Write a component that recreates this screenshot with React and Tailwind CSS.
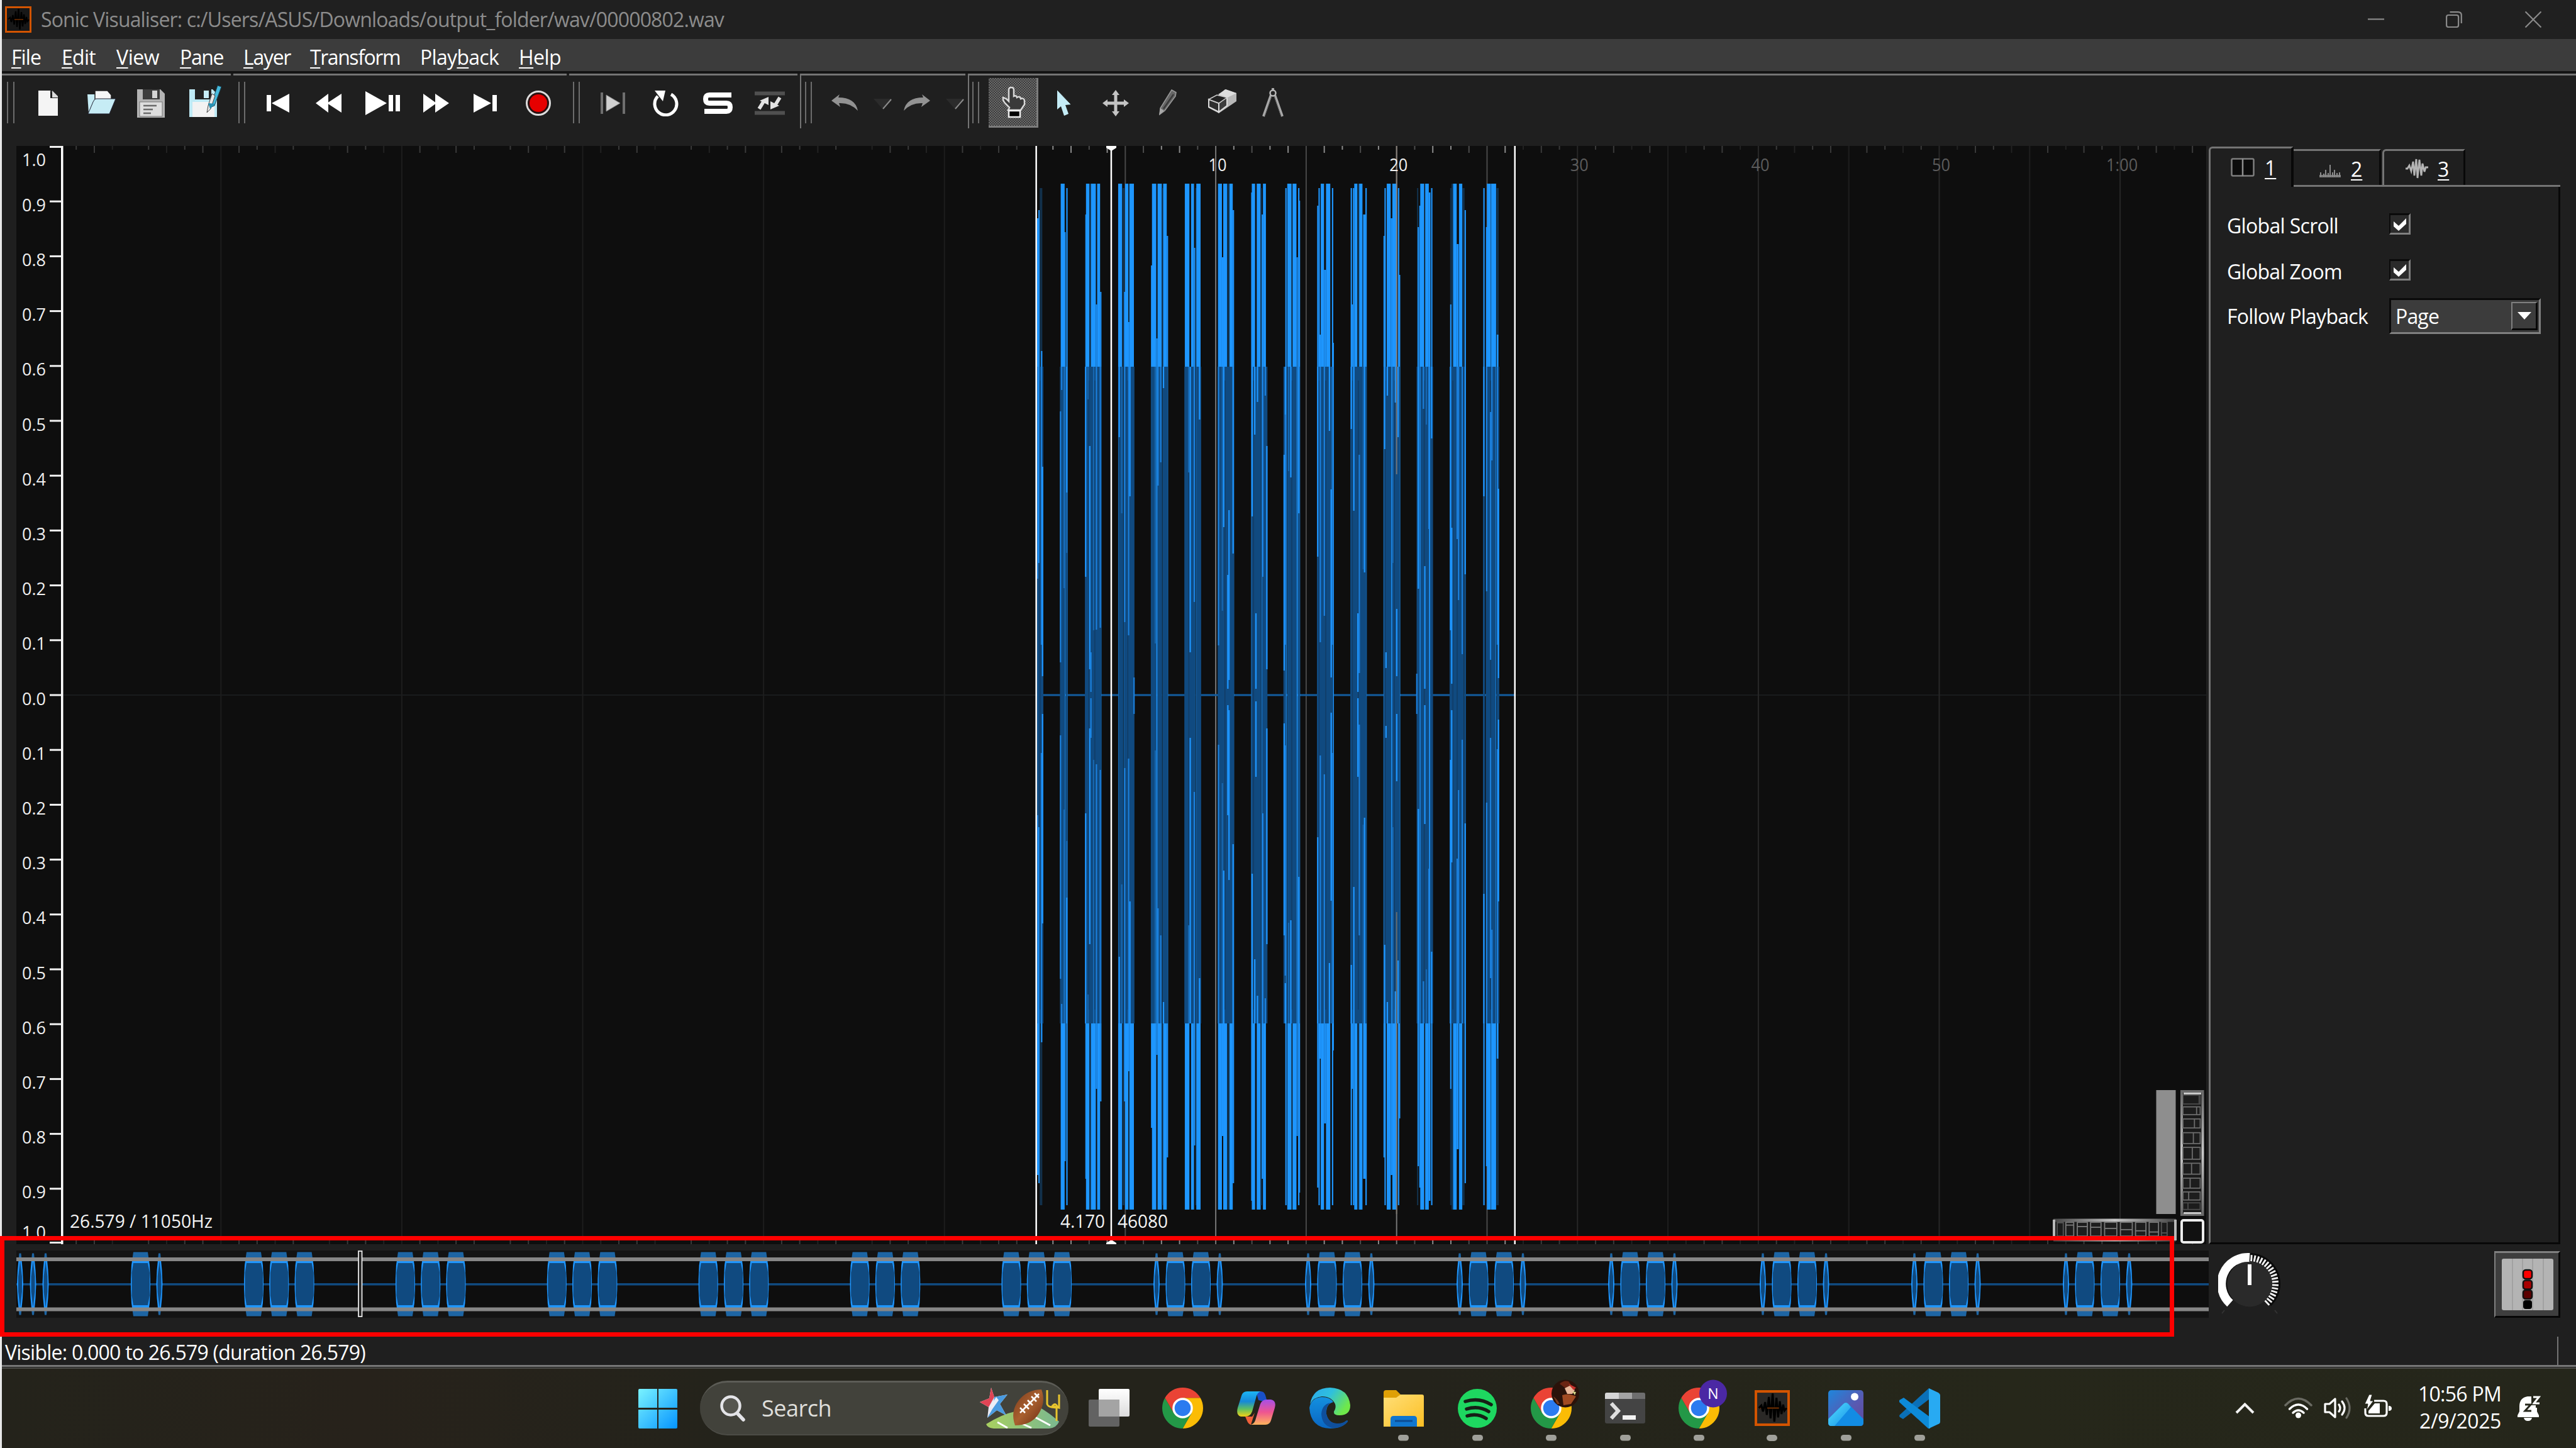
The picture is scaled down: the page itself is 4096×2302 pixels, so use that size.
import React, { useLayoutEffect, useRef } from "react";

const BRIGHT = "#1e96ff";
const MID = "#1b7fdb";
const SOFT = "#1767b0";
const DARK = "#104a80";
const DIM = "#12304a";
const BG = "#0e0e0e";

/* Text whose letter spacing is adjusted so that it takes exactly w pixels. */
function Fit({ w, className = "", children }) {
  const ref = useRef(null);
  useLayoutEffect(() => {
    const el = ref.current;
    const fit = () => {
      el.style.letterSpacing = "0px";
      const natural = el.getBoundingClientRect().width;
      const n = el.textContent.length;
      el.style.letterSpacing = (w - natural) / n + "px";
    };
    fit();
    if (document.fonts && document.fonts.ready) document.fonts.ready.then(fit);
  }, [w]);
  return (
    <span ref={ref} className={"inline-block whitespace-pre " + className}>
      {children}
    </span>
  );
}

/* ---------- title and menu bars ---------- */

function SonicIcon({ className, s = 42, h = 42, bg = "#181818" }) {
  return (
    <svg className={className} width={s} height={h} viewBox="0 0 42 42" preserveAspectRatio="none">
      <rect x="1.5" y="1.5" width="39" height="39" fill={bg} stroke="#d35400" strokeWidth="3" />
      <path d="M5 21H37" stroke="#6a2c00" strokeWidth="1.6" />
      <path
        d="M5 21L8 18L10 25L12.500 14L14.500 29L17 8L19 33L21.500 4L23.500 37L26 9L28 32L30 13L32 28L34 17L35.500 24L38 21"
        fill="none"
        stroke="#000"
        strokeWidth="2.400"
      />
      <path d="M15 21H29" stroke="#7a3200" strokeWidth="1.4" />
    </svg>
  );
}

function TitleBar() {
  return (
    <div className="flex h-[62px] shrink-0 items-center bg-[#202020] pl-[8px] pr-[55px]">
      <SonicIcon />
      <div className="ml-[15px] h-[60px] text-[32px] leading-[59px] text-[#8c8c8c]">
        <Fit w={1086}>Sonic Visualiser: c:/Users/ASUS/Downloads/output_folder/wav/00000802.wav</Fit>
      </div>
      <svg className="ml-auto" width="26" height="26" viewBox="0 0 26 26">
        <path d="M0 12.500H26" stroke="#8a8a8a" strokeWidth="2.200" />
      </svg>
      <svg className="ml-[98px]" width="26" height="26" viewBox="0 0 26 26" fill="none" stroke="#8a8a8a" strokeWidth="2.200">
        <rect x="1.100" y="6" width="19" height="19" rx="3" />
        <path d="M6.500 1.200H19.500Q24.800 1.200 24.800 6.500V19" />
      </svg>
      <svg className="ml-[100px]" width="26" height="26" viewBox="0 0 26 26">
        <path d="M0.500 0.500L25.500 25.500M25.500 0.500L0.500 25.500" stroke="#8a8a8a" strokeWidth="2.200" />
      </svg>
    </div>
  );
}

function Menu({ pre = "", k, post, w, className }) {
  return (
    <div className={className}>
      <Fit w={w}>
        {pre}
        <span className="underline decoration-[2px] underline-offset-[4px]">{k}</span>
        {post}
      </Fit>
    </div>
  );
}

function MenuBar() {
  return (
    <div className="flex h-[55px] shrink-0 border-b-[4px] border-[#141414] bg-[#3c3c3c] pl-[18px] text-[32px] leading-[57px] text-white">
      <Menu k="F" post="ile" w={47} />
      <Menu className="ml-[33px]" k="E" post="dit" w={54} />
      <Menu className="ml-[33px]" k="V" post="iew" w={68} />
      <Menu className="ml-[33px]" k="P" post="ane" w={69} />
      <Menu className="ml-[32px]" k="L" post="ayer" w={75} />
      <Menu className="ml-[31px]" k="T" post="ransform" w={143} />
      <Menu className="ml-[32px]" pre="Play" k="b" post="ack" w={125} />
      <Menu className="ml-[32px]" k="H" post="elp" w={67} />
    </div>
  );
}

/* ---------- toolbar ---------- */

function Handle({ className }) {
  return <div className={"mt-[10px] h-[66px] shrink-0 border-x-[2px] border-[#6c6c6c] " + className} />;
}

function Ico({ w, h, className, children }) {
  return (
    <svg className={"shrink-0 " + className} width={w} height={h} viewBox={`0 0 ${w} ${h}`}>
      {children}
    </svg>
  );
}

function Caret({ className }) {
  return (
    <Ico w={29} h={17} className={className}>
      <path d="M0 0H29L15 17Z" fill="#2b2b2b" />
      <path d="M28 1L15 16" stroke="#8c8c8c" strokeWidth="2" />
    </Ico>
  );
}

function Toolbar() {
  return (
    <div className="flex h-[115px] shrink-0 gap-[4px] pl-[3px]">
      <div className="flex h-[87px] w-[364px] items-start border-t-[3px] border-[#747474]">
        <Handle className="ml-[8px] w-[12px]" />
        <Ico w={33} h={42} className="ml-[37px] mt-[23px]">
          <path d="M1 1H20L32 13V41H1Z" fill="#f4f4f4" />
          <path d="M20 1V13H32Z" fill="#1f1f1f" />
          <path d="M23 1L32 10V12H23Z" fill="#dcdcdc" />
        </Ico>
        <Ico w={48} h={39} className="ml-[44px] mt-[23px]">
          <path d="M2 7H14V34L4 38Z" fill="#c6ecf5" />
          <path d="M14 1H34L40 8V18H14Z" fill="#f6f6f6" stroke="#222" strokeWidth="1.500" />
          <path d="M16 14H47L37 38H3L11 19Q13 14 16 14Z" fill="#c6ecf5" stroke="#223" strokeWidth="1" />
        </Ico>
        <Ico w={46} h={47} className="ml-[32px] mt-[21px]">
          <path d="M1 1H38L45 8V46H1Z" fill="#b4b4b4" />
          <rect x="10" y="1" width="27" height="16" fill="#3c3c3c" />
          <rect x="25" y="3" width="8" height="12" fill="#d4d4d4" />
          <rect x="5" y="21" width="36" height="23" fill="#dedede" stroke="#777" strokeWidth="1" />
          <path d="M11 27H32M11 33H26M11 39H23" stroke="#6a6a6a" strokeWidth="2.500" />
        </Ico>
        <Ico w={52} h={52} className="ml-[37px] mt-[15px]">
          <path d="M1 7H38L45 14V51H1Z" fill="#bfeaf5" />
          <rect x="10" y="7" width="26" height="16" fill="#222" />
          <rect x="24" y="9" width="8" height="12" fill="#c8eef8" />
          <rect x="6" y="27" width="35" height="24" fill="#f2f2f2" />
          <path d="M46 1L52 3L41 33L34 36Z" fill="#45b9dc" stroke="#1c4654" strokeWidth="1" />
          <path d="M37 14L42 17L35 38L29 44L31 33Z" fill="#e8e8e8" stroke="#444" strokeWidth="1" />
          <path d="M31 29L42 30L34 38Z" fill="#2792b4" />
        </Ico>
      </div>
      <div className="flex h-[87px] w-[530px] items-start border-t-[3px] border-[#747474] fill-white">
        <Handle className="ml-[8px] w-[11px]" />
        <Ico w={38} h={30} className="ml-[33px] mt-[29px]">
          <path d="M1 2H8V28H1ZM37 0V30L9 15Z" />
        </Ico>
        <Ico w={41} h={30} className="ml-[41px] mt-[29px]">
          <path d="M20 0V30L0 15ZM41 0V30L18 15Z" />
        </Ico>
        <Ico w={57} h={38} className="ml-[37px] mt-[25px]">
          <path d="M1 0L35 19L1 38ZM38 6H45V32H38ZM49 6H56V32H49Z" />
        </Ico>
        <Ico w={42} h={30} className="ml-[35px] mt-[29px]">
          <path d="M1 0V30L22 15ZM20 0V30L42 15Z" />
        </Ico>
        <Ico w={39} h={30} className="ml-[38px] mt-[29px]">
          <path d="M1 0V30L29 15ZM31 2H38V28H31Z" />
        </Ico>
        <Ico w={42} h={42} className="ml-[44px] mt-[23px]">
          <circle cx="21" cy="21" r="18.500" fill="#2a1010" stroke="#dcdcdc" strokeWidth="3" />
          <circle cx="21" cy="21" r="14" fill="#e60000" />
        </Ico>
      </div>
      <div className="flex h-[87px] w-[363px] items-start border-t-[3px] border-[#747474]">
        <Handle className="ml-[6px] w-[11px]" />
        <Ico w={41} h={34} className="ml-[32px] mt-[27px]">
          <path d="M3 0V34M38 0V34" stroke="#6e6e6e" strokeWidth="4" />
          <path d="M10 4V30L32 17Z" fill="#d0d0d0" stroke="#888" strokeWidth="1" />
        </Ico>
        <Ico w={42} h={42} className="ml-[42px] mt-[23px]">
          <path d="M30 7A17.500 17.500 0 1 1 9 10" fill="none" stroke="#fff" strokeWidth="5" />
          <path d="M4 1H21L17 18Z" fill="#fff" />
        </Ico>
        <Ico w={47} h={36} className="ml-[39px] mt-[26px]">
          <path d="M45 5H10Q4 5 4 11.500Q4 18 10 18H37Q43 18 43 24.500Q43 31 37 31H2" fill="none" stroke="#fff" strokeWidth="8" />
        </Ico>
        <Ico w={48} h={38} className="ml-[35px] mt-[25px]">
          <path d="M0 3.500H48M0 34.500H48" stroke="#505050" strokeWidth="6" />
          <path d="M7 28L15 15" stroke="#e2e2e2" strokeWidth="5.500" />
          <path d="M8 15L22 9V22Z" fill="#e2e2e2" />
          <path d="M40 10L32 23" stroke="#e2e2e2" strokeWidth="5.500" />
          <path d="M39 23L25 29V16Z" fill="#e2e2e2" />
        </Ico>
      </div>
      <div className="flex h-[87px] w-[263px] items-start border-l-[2px] border-t-[3px] border-[#747474]">
        <Handle className="ml-[6px] w-[11px]" />
        <Ico w={43} h={26} className="ml-[31px] mt-[30px]">
          <path d="M0 10L13 0L11 5Q38 5 42 26Q30 13 12 14L14 20Z" fill="#929292" />
        </Ico>
        <Caret className="ml-[24px] mt-[37px]" />
        <Ico w={43} h={26} className="ml-[18px] mt-[30px]">
          <path d="M43 10L30 0L32 5Q5 5 1 26Q13 13 31 14L29 20Z" fill="#929292" />
        </Ico>
        <Caret className="ml-[25px] mt-[37px]" />
      </div>
      <div className="flex h-[87px] flex-1 items-start border-l-[2px] border-t-[3px] border-[#747474]">
        <Handle className="ml-[5px] w-[11px]" />
        <div className="ml-[15px] mt-[4px] h-[79px] w-[79px] border-b-[3px] border-r-[3px] border-[#7c7c7c] bg-[#4f4f4f] bg-[repeating-conic-gradient(#6a6a6a_0_25%,#3c3c3c_0_50%)] bg-[length:4px_4px]">
          <Ico w={40} h={52} className="ml-[20px] mt-[13px]">
            <path
              d="M13 34L6 27Q2 22 3 18L8 20L12 24V6Q12 2 16 2Q20 2 20 6V16Q24 14 25 18Q30 15 31 20Q36 18 37 23V29L31 38H11Z"
              fill="#3a3a3a"
              stroke="#d8d8d8"
              strokeWidth="2.500"
            />
            <rect x="12" y="39" width="18" height="10" fill="#050505" stroke="#eee" strokeWidth="2.500" />
          </Ico>
        </div>
        <Ico w={24} h={41} className="ml-[29px] mt-[23px]">
          <path d="M1 0L23 23L14 24L19 38L12 41L7 26L1 31Z" fill="#c4ecf6" />
          <path d="M1 0L23 23" stroke="#222" strokeWidth="1" />
        </Ico>
        <Ico w={42} h={42} className="ml-[49px] mt-[23px]">
          <path d="M21 4V38M4 21H38" stroke="#c4c4c4" strokeWidth="5" />
          <path d="M21 0L27 8H15ZM21 42L27 34H15ZM0 21L8 15V27ZM42 21L34 15V27Z" fill="#c4c4c4" />
        </Ico>
        <Ico w={31} h={43} className="ml-[46px] mt-[21px]">
          <path d="M22 2L29 6L28 12L11 35L3 41L4 31Z" fill="#666" stroke="#9a9a9a" strokeWidth="1.500" />
          <path d="M25 9L9 32" stroke="#3a3a3a" strokeWidth="2.500" />
          <path d="M4 31L10 35L2 42Z" fill="#a8a8a8" />
        </Ico>
        <Ico w={47} h={40} className="ml-[48px] mt-[21px]">
          <path d="M16 11L28 1L46 7V20L18 39L1 30V17Z" fill="#b8b8b8" />
          <path d="M2 17L18 23V37L2 29Z" fill="#2e2e2e" stroke="#ddd" strokeWidth="2" />
          <path d="M18 23L31 13L31 27L18 37Z" fill="#3d3d3d" stroke="#ddd" strokeWidth="2" />
          <path d="M2 17L15 10L31 14L18 23Z" fill="#222" stroke="#ccc" strokeWidth="1.500" />
          <path d="M17 9L29 1L46 7L32 14Z" fill="#dcdcdc" />
        </Ico>
        <Ico w={34} h={47} className="ml-[40px] mt-[20px]">
          <path d="M17 0V4M14 11L2 45M20 11L32 45" stroke="#a8a8a8" strokeWidth="4" />
          <path d="M15 13L4 45M19 13L30 45" stroke="#555" strokeWidth="1" />
          <circle cx="17" cy="8" r="4.500" fill="#222" stroke="#b8b8b8" strokeWidth="2.500" />
        </Ico>
      </div>
    </div>
  );
}

/* ---------- main waveform pane ---------- */

const MID_Y = 1105;
const U = (u) => 1618.7 + u * 0.52211;
const V = (x) => 1637.3 + x * 0.3101;
const W = (x) => 2028 + x * 0.3101;

/* Peak bars: [start, end, peak height, dim] */
const PEAKS = [
  [58, 62, 758], [62, 66, 771], [66, 74, 806, 1], [70, 74, 547],
  [130, 142, 813], [141, 145, 736], [147, 151, 806],
  [205, 208, 764], [207, 217, 813], [217, 222, 813, 1], [222, 237, 813], [237, 241, 621], [241, 250, 813], [250, 254, 641],
  [305, 317, 813], [317, 325, 806, 1], [323, 326, 641], [326, 336, 813], [335, 339, 593], [339, 353, 813],
  [405, 408, 683], [408, 421, 813], [421, 425, 567], [425, 438, 813], [438, 442, 806, 1], [442, 453, 813], [453, 456, 730],
  [508, 522, 813], [527, 536, 813], [536, 540, 711], [540, 543, 806, 1], [543, 556, 813],
  [609, 621, 813], [621, 625, 696], [625, 637, 813], [637, 644, 813, 1], [644, 654, 813], [654, 657, 771],
  [710, 713, 799], [712, 722, 813], [727, 739, 813], [739, 742, 806, 1], [742, 746, 764], [746, 755, 813],
  [814, 817, 806], [820, 833, 813], [836, 848, 813], [848, 850, 696], [853, 855, 806], [855, 857, 786],
  [911, 914, 778], [915, 918, 806], [918, 922, 573], [922, 932, 813], [932, 938, 676], [938, 951, 813], [956, 959, 806], [958, 960, 560],
  [1013, 1016, 806], [1016, 1020, 621], [1020, 1024, 806], [1024, 1033, 813], [1033, 1039, 813, 1], [1039, 1049, 813], [1051, 1058, 764], [1058, 1061, 806],
  [1113, 1116, 730], [1116, 1119, 806], [1123, 1135, 813], [1135, 1140, 758], [1140, 1153, 813], [1157, 1160, 806], [1160, 1163, 668],
  [1215, 1218, 806, 1], [1217, 1221, 744], [1222, 1225, 778], [1225, 1237, 813], [1240, 1251, 813], [1251, 1256, 799], [1258, 1262, 806],
  [1316, 1320, 806, 1], [1316, 1320, 621], [1320, 1325, 813, 1], [1325, 1336, 813], [1336, 1342, 717], [1343, 1353, 813], [1353, 1360, 806, 1], [1360, 1364, 771],
  [1417, 1421, 806], [1425, 1428, 744], [1428, 1440, 813], [1441, 1456, 813], [1457, 1464, 806, 1], [1458, 1463, 573],
];

/* Mean bodies and the dark seams between their strokes. */
const BODIES = [
  [V(38), V(70)], [V(155), V(181)], [V(187), V(194)], [V(283), V(367)], [V(455), V(479)], [V(484), V(537)],
  [V(621), V(649)], [V(655), V(678)], [V(683), V(708)], [V(793), V(849)], [V(855), V(879)], [V(965), V(1047)],
  [V(1137), V(1186)], [V(1192), V(1219)], [W(41), W(54)], [W(62), W(109)], [W(117), W(125)], [W(213), W(296)],
  [W(384), W(467)], [W(556), W(594)], [W(599), W(638)], [W(724), W(740)], [W(744), W(788)], [W(794), W(808)],
  [W(893), W(965)], [W(970), W(977)], [W(1065), W(1074)], [W(1080), W(1129)], [W(1135), W(1148)],
];
const SEAMS = [
  V(53), V(303), V(334), V(503), V(816), V(1001), V(1148), W(84), W(224), W(258), W(395), W(425), W(563), W(610), W(763), W(910), W(932), W(1104),
];

/* Bright strokes inside the bodies: [x, outer, inner, tone] */
const STROKES = [
  [V(46), 522, 210], [V(40), 522, 185, 1], [V(60), 522, 80, 1], [V(66), 363, 30],
  [V(164), 522, 485, 1], [V(176), 522, 170, 2], [V(190), 522, 322], [V(190), 322, 226, 2], [V(158), 451, 52, 1],
  [V(287), 522, 188], [V(299), 522, 470, 2], [V(308), 396, 41], [V(328), 522, 103, 2], [V(342), 522, 104, 1], [V(362), 522, 107, 1], [V(314), 68, 5, 1],
  [V(459), 522, 410], [V(472), 522, 289, 2], [V(487), 522, 116, 1], [V(507), 522, 95, 1], [V(514), 522, 316], [V(535), 28, -30, 1],
  [V(658), 522, 333, 1], [V(672), 522, 370, 1], [V(686), 522, 488], [V(644), 522, 82, 2],
  [V(815), 522, 354, 2], [V(823), 522, 68], [V(844), 522, 148, 1], [V(871), 522, 438],
  [V(968), 522, 79, 1], [V(988), 522, 134, 2], [V(995), 522, 267], [V(1022), 294, 24], [V(1016), 191, 10], [V(1043), 522, 225],
  [V(1141), 522, 284], [V(1154), 522, 414], [V(1168), 522, 466], [V(1195), 522, 188, 1], [V(1208), 522, 476, 1], [V(1216), 396, 41], [V(1160), 130, 10],
  [W(45), 382, 39], [W(51), 522, 446], [W(51), 446, 80, 1], [W(67), 522, 356, 2], [W(79), 522, 346], [W(120), 522, 289],
  [W(217), 522, 220], [W(230), 522, 84, 1], [W(251), 522, 126, 1], [W(277), 522, 420], [W(292), 522, 80, 1], [W(286), 327, 28],
  [W(389), 522, 423], [W(402), 522, 293], [W(457), 522, 195], [W(451), 522, 200, 2], [W(430), 382, 35, 1], [W(423), 130, 5],
  [W(560), 522, 391], [W(574), 522, 476], [W(602), 522, 210, 2], [W(615), 522, 465], [W(629), 522, 410], [W(622), 137, 30], [W(567), 68, 43],
  [W(733), 522, 169], [W(759), 522, 455, 1], [W(774), 522, 430, 2], [W(787), 522, 264, 1], [W(801), 522, 408], [W(766), 205, 10], [W(725), 34, -30, 1],
  [W(898), 522, 103], [W(904), 266, 18], [W(932), 522, 248, 1], [W(939), 522, 151, 1], [W(958), 522, 65, 1], [W(973), 522, 192],
  [W(1069), 522, 316], [W(1083), 522, 165, 1], [W(1103), 450, 56, 1], [W(1110), 522, 373, 1], [W(1138), 522, 80, 1], [W(1144), 328, 27],
];
const TONES = [BRIGHT, MID, SOFT];

function Waveform() {
  const w1 = 2.133;
  return (
    <g>
      <rect x="1648" y={MID_Y - 1.500} width="761" height="3" fill="#135c9e" />
      {PEAKS.map(([a, b, p, dim], i) => (
        <rect key={"p" + i} x={U(a)} y={MID_Y - p} width={Math.max(U(b) - U(a), w1)} height={p * 2 + 5} fill={dim ? DIM : BRIGHT} />
      ))}
      {BODIES.map(([a, b], i) => (
        <rect key={"b" + i} x={a} y={MID_Y - 522} width={b - a} height={1044} fill={DARK} />
      ))}
      {SEAMS.map((x, i) => (
        <rect key={"s" + i} x={x - 0.700} y={MID_Y - 500} width="1.400" height={1000} fill="#123b63" />
      ))}
      {STROKES.map(([x, o, n, t], i) => (
        <g key={"k" + i} fill={TONES[t || 0]}>
          <rect x={x - 1.100} y={MID_Y - o} width="2.200" height={o - n} />
          {n > 0 && <rect x={x - 1.100} y={MID_Y + n + (i % 3) * 6} width="2.200" height={Math.max(o - n - (i % 3) * 6, 1)} />}
        </g>
      ))}
    </g>
  );
}

const SEC = 28.76;
const ZERO = 1645.5;

function Grid() {
  const lines = [];
  for (let s = -45; s <= 60; s += 5) {
    if (s === 0 || (s < 0 && s % 10 === 0)) continue;
    const inside = s > 0 && s < 27;
    const ten = s % 10 === 0;
    const fill = inside ? (ten ? "#777" : "#484848") : s < 0 ? "#1d1d1d" : ten ? "#272727" : "#1e1e1e";
    lines.push(<rect key={"g" + s} x={ZERO + s * SEC - 1} y="232" width="2" height="1746" fill={fill} />);
  }
  const ticks = [];
  for (let s = -53; s <= 64; s++) {
    if (s % 5 === 0) continue;
    const inside = s > 0 && s < 27;
    const long = s % 2 === 0;
    const fill = inside ? (s % 3 ? "#8a8a8a" : "#4c4c4c") : s % 3 ? "#3a3a3a" : "#222";
    const h = long ? 11 : 6;
    ticks.push(<rect key={"t" + s} x={ZERO + s * SEC - 1} y="232" width="2" height={h} fill={fill} />);
    ticks.push(<rect key={"u" + s} x={ZERO + s * SEC - 1} y={1978 - h} width="2" height={h} fill={fill} />);
  }
  return (
    <g>
      <rect x="100" y={MID_Y - 1} width="3408" height="2" fill="#191b1d" />
      {lines}
      {ticks}
    </g>
  );
}

const X9 = (x) => 3200.2 + x * 0.57136;
const Y9 = (y) => 1711.8 + y * 0.37678;
const V_CELLS = [[78, 115, 519], [127, 160, 512], [178, 216, 506], [236, 282, 503], [298, 348, 500], [365, 411, 498], [428, 470, 494], [486, 520, 490], [532, 560, 488]];
const H_CELLS = [[124, 141, 622], [148, 170, 632], [180, 208, 638], [217, 246, 641], [256, 290, 646], [300, 333, 651], [342, 371, 656], [380, 406, 661], [414, 430, 665]];

function Wheels() {
  return (
    <g fill="none">
      <defs>
        <linearGradient id="wv" x1="0" y1="0" x2="0" y2="1">
          <stop offset="0" stopColor="#6a6a6a" />
          <stop offset="0.500" stopColor="#c8c8c8" />
          <stop offset="1" stopColor="#6a6a6a" />
        </linearGradient>
        <linearGradient id="wh" gradientUnits="userSpaceOnUse" x1="3265" y1="0" x2="3460" y2="0">
          <stop offset="0" stopColor="#444" />
          <stop offset="0.500" stopColor="#c4c4c4" />
          <stop offset="1" stopColor="#444" />
        </linearGradient>
      </defs>
      <rect x="3428.500" y="1733" width="31" height="197" fill="#8e8e8e" />
      <rect x="3469" y="1735" width="33.500" height="196" fill="#1b1b1b" stroke="url(#wv)" strokeWidth="4" />
      <path d="M3472 1738.500H3500M3472 1928.500H3500" stroke="#c8c8c8" strokeWidth="3" />
      {V_CELLS.map(([a, b, m], i) => (
        <g key={i} stroke="#6c6c6c" strokeWidth="1.800" opacity={i === 0 || i === 8 ? 0.6 : 1}>
          <rect x={X9(474)} y={Y9(a)} width={X9(522) - X9(474)} height={Y9(b) - Y9(a)} fill="#1d1d1d" />
          <path d={`M${X9(m)} ${Y9(a)}V${Y9(b)}`} />
        </g>
      ))}
      <rect x="3265" y="1939.500" width="195" height="32" fill="#1b1b1b" />
      <path d="M3265 1940H3460M3265 1971H3460" stroke="url(#wh)" strokeWidth="5" />
      <path d="M3266 1939V1972M3459 1939V1972" stroke="#b8b8b8" strokeWidth="4" />
      {H_CELLS.map(([a, b, m], i) => (
        <g key={i} stroke="#7a7a7a" strokeWidth="1.800" opacity={i === 0 || i === 8 ? 0.6 : 1}>
          <rect x={X9(a)} y={Y9(614)} width={X9(b) - X9(a)} height={22} fill="#1d1d1d" />
          <path d={`M${X9(a)} ${Y9(m - 6)}H${X9(b)}`} />
        </g>
      ))}
      <rect x="3469" y="1940" width="34" height="35" rx="3" fill="#111" stroke="#ededed" strokeWidth="4" />
    </g>
  );
}

function Pane() {
  const scale = [];
  for (let i = -10; i <= 10; i++) {
    const y = MID_Y - i * 87.2;
    const labelY = i === 10 ? 254 : i === -10 ? 1959 : y + 5.500;
    scale.push(
      <g key={i}>
        <rect x="79" y={Math.min(Math.max(y - 1.500, 232), 1974)} width="19" height="3" fill="#f2f2f2" />
        <text x="73" y={labelY + 10} textAnchor="end" textLength="38" lengthAdjust="spacingAndGlyphs" fill="#f0f0f0">
          {(Math.abs(i) / 10).toFixed(1)}
        </text>
      </g>
    );
  }
  const labels = [["10", 10], ["20", 20], ["30", 30], ["40", 40], ["50", 50], ["1:00", 60]];
  return (
    <svg className="shrink-0 bg-[#0e0e0e]" width="3482" height="1746" viewBox="26 232 3482 1746" fontSize="28" fontFamily='"Open Sans", "Noto Sans", sans-serif'>
      <Grid />
      <Waveform />
      <rect x={ZERO + 20 * SEC - 1} y="232" width="2" height="522" fill="#8a8078" opacity="0.8" />
      <rect x={ZERO + 20 * SEC - 1} y="1450" width="2" height="480" fill="#7c756c" opacity="0.8" />
      <rect x="97" y="232" width="3.500" height="1746" fill="#fff" />
      {scale}
      {labels.map(([t, s]) => (
        <text key={t} x={ZERO + s * SEC + 3} y="271.500" textAnchor="middle" textLength={s === 60 ? 50 : 29} lengthAdjust="spacingAndGlyphs" fill={s < 27 ? "#f0f0f0" : "#5c5c5c"}>
          {t}
        </text>
      ))}
      <rect x="1646.400" y="232" width="2.500" height="1746" fill="#fff" />
      <rect x="2407.500" y="232" width="2.500" height="1746" fill="#fff" />
      <rect x="1765.700" y="232" width="2.500" height="1746" fill="#fff" />
      <path d="M1759 232H1775V235L1767.200 240L1759 235Z" fill="#fff" />
      <path d="M1759 1978H1775V1976L1767.200 1971L1759 1976Z" fill="#fff" />
      <g fill="#f4f4f4" fontSize="29">
        <text x="111" y="1952" textLength="227" lengthAdjust="spacingAndGlyphs">26.579 / 11050Hz</text>
        <text x="1686" y="1952" textLength="71" lengthAdjust="spacingAndGlyphs">4.170</text>
        <text x="1777" y="1952" textLength="80" lengthAdjust="spacingAndGlyphs">46080</text>
      </g>
      <Wheels />
    </svg>
  );
}

/* ---------- property panel ---------- */

function Check() {
  return (
    <div className="h-[34px] w-[34px] border-b-[3px] border-l-[2px] border-r-[3px] border-t-[3px] border-b-[#808080] border-l-[#0a0a0a] border-r-[#808080] border-t-[#0a0a0a] bg-[#2b2b2b]">
      <svg width="28" height="27" viewBox="0 0 28 27">
        <path d="M5 10L13 17L25 5V14L13 25L5 18Z" fill="#fff" />
      </svg>
    </div>
  );
}

function Row({ label, w, children, className }) {
  return (
    <div className={"flex " + className}>
      <div className="w-[258px] text-[32px] leading-[40px] text-white">
        <Fit w={w}>{label}</Fit>
      </div>
      {children}
    </div>
  );
}

function SidePanel() {
  return (
    <div className="ml-[4px] flex h-[1746px] w-[559px] flex-col">
      <div className="flex h-[65px] shrink-0 text-[32px] leading-[40px] text-white">
        <div className="mt-[1px] flex w-[135px] rounded-tl-[6px] border-l-[3px] border-r-[4px] border-t-[3px] border-l-[#747474] border-r-[#080808] border-t-[#747474]">
          <svg className="ml-[32px] mt-[15px]" width="38" height="30" viewBox="0 0 38 30">
            <rect x="1.500" y="1.500" width="35" height="27" rx="2" fill="#0c0c0c" stroke="#7e7e7e" strokeWidth="2.500" />
            <path d="M19 1V29" stroke="#8e8e8e" strokeWidth="2.500" />
          </svg>
          <span className="ml-[16px] mt-[11px] underline decoration-[2px] underline-offset-[4px]">1</span>
        </div>
        <div className="flex flex-1 items-start border-b-[3px] border-[#747474] pt-[5px]">
          <div className="flex h-[57px] w-[139px] border-r-[3px] border-t-[3px] border-r-[#080808] border-t-[#747474]">
            <svg className="ml-[40px] mt-[22px]" width="36" height="20" viewBox="0 0 36 20">
              <path d="M1 18H35" stroke="#7c7c7c" strokeWidth="4" />
              <path d="M3 19V12M8 19V14M11 19V8M15 19V13M18 19V0M22 19V12M25 19V8M29 19V13M33 19V12" stroke="#8a8a8a" strokeWidth="2" />
            </svg>
            <span className="ml-[15px] mt-[9px] underline decoration-[2px] underline-offset-[4px]">2</span>
          </div>
          <div className="ml-[2px] flex h-[57px] w-[132px] rounded-tl-[6px] border-l-[3px] border-r-[3px] border-t-[3px] border-l-[#747474] border-r-[#080808] border-t-[#747474]">
            <svg className="ml-[34px] mt-[12px]" width="36" height="32" viewBox="0 0 36 32">
              <path d="M0 16H3L6 11L9 20L12 5L14 27L17 1L19 31L22 2L25 27L27 8L30 21L32 14H36" fill="none" stroke="#b4b4b4" strokeWidth="2.800" />
            </svg>
            <span className="ml-[15px] mt-[9px] underline decoration-[2px] underline-offset-[4px]">3</span>
          </div>
        </div>
      </div>
      <div className="flex-1 border-b-[3px] border-l-[3px] border-r-[3px] border-b-[#080808] border-l-[#747474] border-r-[#080808] pl-[26px] pt-[42px]">
        <Row className="h-[34px]" label="Global Scroll" w={177}>
          <Check />
        </Row>
        <Row className="mt-[39px] h-[34px]" label="Global Zoom" w={183}>
          <Check />
        </Row>
        <div className="mt-[28px] flex items-center">
          <div className="w-[258px] text-[32px] leading-[57px] text-white">
            <Fit w={224}>Follow Playback</Fit>
          </div>
          <div className="flex h-[57px] w-[241px] items-center border-b-[3px] border-l-[3px] border-r-[3px] border-t-[3px] border-b-[#808080] border-l-[#0a0a0a] border-r-[#808080] border-t-[#0a0a0a] bg-[#3c3c3c] pl-[7px] pr-[2px] text-[32px] text-white">
            <Fit w={69} className="leading-[50px]">Page</Fit>
            <div className="ml-auto flex h-[45px] w-[42px] items-center justify-center border-b-[3px] border-l-[2px] border-r-[3px] border-t-[2px] border-b-[#080808] border-l-[#808080] border-r-[#080808] border-t-[#808080]">
              <svg width="22" height="12" viewBox="0 0 22 12">
                <path d="M0 0H22L11 12Z" fill="#fff" />
              </svg>
            </div>
          </div>
        </div>
      </div>
    </div>
  );
}

/* ---------- overview strip ---------- */

function overviewBlobs() {
  const out = [];
  const thin = (x) => out.push([x, 10, 1]);
  const wide = (x) => out.push([x, 31, 0]);
  [27, 47.500, 67.500].forEach(thin);
  wide(208);
  thin(248.500);
  for (let g = 0; g < 6; g++) {
    const x = 388 + g * 240.9;
    [0, 40.3, 80.6].forEach((d) => wide(x + d));
  }
  for (let g = 0; g < 7; g++) {
    const x = 1834 + g * 241;
    thin(x);
    wide(x + 19.500);
    wide(x + 60);
    thin(x + 100.500);
  }
  return out;
}

function Overview() {
  const c = 2041.5;
  return (
    <svg className="ml-[26px] shrink-0" width="3486" height="147" viewBox="26 1978 3486 147">
      <rect x="26" y="1988" width="3486" height="107" fill={BG} />
      <rect x="26" y={c - 1.500} width="3486" height="3.500" fill={DARK} />
      {overviewBlobs().map(([x, w, thin], i) =>
        thin ? (
          <g key={i}>
            <path d={`M${x + w / 2 - 1.500} ${c - 49}H${x + w / 2 + 1.500}L${x + w - 1} ${c - 22}L${x + w} ${c}L${x + w - 1} ${c + 22}L${x + w / 2 + 1.500} ${c + 49}H${x + w / 2 - 1.500}L${x + 1} ${c + 22}L${x} ${c}L${x + 1} ${c - 22}Z`} fill={BRIGHT} />
            <path d={`M${x + w / 2} ${c - 37}L${x + w - 2} ${c - 12}V${c + 12}L${x + w / 2} ${c + 37}L${x + 2} ${c + 12}V${c - 12}Z`} fill={DARK} />
          </g>
        ) : (
          <g key={i}>
            <path d={`M${x + 4} ${c - 51}H${x + w - 4}L${x + w - 1} ${c - 30}L${x + w} ${c - 8}V${c + 8}L${x + w - 1} ${c + 30}L${x + w - 4} ${c + 51}H${x + 4}L${x + 1} ${c + 30}L${x} ${c + 8}V${c - 8}L${x + 1} ${c - 30}Z`} fill={BRIGHT} />
            <path d={`M${x + 4} ${c - 33.500}H${x + w - 4}L${x + w - 1} ${c - 18}V${c + 18}L${x + w - 4} ${c + 33.500}H${x + 4}L${x + 1.500} ${c + 18}V${c - 18}Z`} fill={DARK} />
          </g>
        )
      )}
      <rect x="26" y="1988" width="3486" height="12" fill="#1b1b1b" opacity="0.4" />
      <rect x="26" y="2083" width="3486" height="12" fill="#1b1b1b" opacity="0.4" />
      <rect x="26" y="1999" width="3486" height="6" fill="#868686" />
      <rect x="26" y="2078.500" width="3486" height="6" fill="#868686" />
      <rect x="570" y="1989" width="5.500" height="104" fill="#222" stroke="#e8e8e8" strokeWidth="1.800" />
    </svg>
  );
}

function Knob() {
  const ticks = [];
  for (let i = 0; i < 19; i++) {
    const a = ((-86 + i * 7.4) * Math.PI) / 180;
    ticks.push(
      <path key={i} d={`M${50 + 36 * Math.cos(a)} ${51 + 36 * Math.sin(a)}L${50 + 46 * Math.cos(a)} ${51 + 46 * Math.sin(a)}`} stroke="#f0f0f0" strokeWidth="3" />
    );
  }
  return (
    <svg className="ml-[15px] mt-[12px] shrink-0" width="100" height="104" viewBox="0 0 100 104">
      <circle cx="50" cy="51" r="49" fill="#0a0a0a" />
      <path d="M14 88L50 51L86 88V104H14Z" fill="#1f1f1f" />
      <circle cx="50" cy="51" r="36" fill="#2a2a2a" />
      <path d="M19 82A42 42 0 0 1 50 9" fill="none" stroke="#fff" strokeWidth="14" />
      {ticks}
      <circle cx="50" cy="53" r="34.500" fill="#2a2a2a" />
      <path d="M50 20V53" stroke="#fff" strokeWidth="6" />
      <path d="M10 93L6 98M90 93L94 98" stroke="#333" strokeWidth="2" />
    </svg>
  );
}

function LevelButton() {
  return (
    <div className="ml-auto mr-[25px] mt-[11px] h-[106px] w-[105px] border-b-[3px] border-l-[2px] border-r-[3px] border-t-[3px] border-b-[#060606] border-l-[#808080] border-r-[#060606] border-t-[#808080] bg-[#3e3e3e]">
      <svg className="ml-[10px] mt-[9px]" width="82" height="82" viewBox="0 0 82 82">
        <rect width="82" height="82" rx="3" fill="#b4b4b4" />
        <path d="M17 0V82M33 0V82M49 0V82M66 0V82" stroke="#9a9a9a" strokeWidth="1.500" />
        <rect x="34" y="18" width="14" height="14" rx="4" fill="#ff0000" stroke="#111" strokeWidth="2.500" />
        <rect x="34" y="34.500" width="14" height="14" rx="4" fill="#a80000" stroke="#111" strokeWidth="2.500" />
        <rect x="34" y="50" width="14" height="14" rx="4" fill="#5c0000" stroke="#111" strokeWidth="2.500" />
        <rect x="34" y="66" width="14" height="14" rx="4" fill="#000" />
      </svg>
    </div>
  );
}

/* ---------- taskbar ---------- */

function Task({ w, className = "", dot, children }) {
  return (
    <svg className={"h-[126px] shrink-0 " + className} width={w} height="126" viewBox={`0 0 ${w} 126`}>
      {children}
      {dot && <rect x={dot - 8} y="105" width="17" height="9.500" rx="4.500" fill="#a0a09a" />}
    </svg>
  );
}

function ChromeMark() {
  return (
    <g>
      <path d="M32.500 46.250H60.640A32.500 32.500 0 0 1 32.500 95L46.600 70.600Z" fill="#fbbc05" />
      <path d="M18.400 70.600L4.360 46.250A32.500 32.500 0 0 0 32.500 95L46.600 70.600Z" fill="#239847" />
      <path d="M18.400 70.600L4.360 46.250A32.500 32.500 0 0 1 60.640 46.250H32.500Z" fill="#ea4335" />
      <circle cx="32.500" cy="62.500" r="16.250" fill="#fff" />
      <circle cx="32.500" cy="62.500" r="12.800" fill="#2b7bf0" />
    </g>
  );
}

function SearchBox() {
  return (
    <div className="ml-[36px] mt-[19px] flex h-[87px] w-[586px] shrink-0 items-center rounded-full border-b-[2px] border-t-[3px] border-b-[#4c4c46] border-t-[#5c5c56] bg-[#42423b] pl-[32px]">
      <svg width="40" height="42" viewBox="0 0 40 42">
        <circle cx="17" cy="17" r="14.500" fill="#55554f" stroke="#e4e4e8" strokeWidth="4.500" />
        <path d="M27.500 29L37 39" stroke="#e4e4e8" strokeWidth="5.500" strokeLinecap="round" />
      </svg>
      <div className="ml-[26px] text-[36px] leading-[80px] text-[#dededa]">
        <Fit w={111}>Search</Fit>
      </div>
      <svg className="ml-auto mr-[13px]" width="132" height="70" viewBox="0 0 132 70">
        <defs>
          <linearGradient id="field" x1="0" y1="0" x2="1" y2="0">
            <stop offset="0" stopColor="#a8cf60" />
            <stop offset="1" stopColor="#7ab890" />
          </linearGradient>
          <linearGradient id="ball" x1="0" y1="0" x2="1" y2="1">
            <stop offset="0" stopColor="#7a3a1c" />
            <stop offset="0.500" stopColor="#a9602f" />
            <stop offset="1" stopColor="#6a2c12" />
          </linearGradient>
        </defs>
        <path d="M14 60Q40 44 60 40L100 34Q114 42 130 56Q126 66 114 67H26Q16 66 14 60Z" fill="url(#field)" />
        <path d="M32 57L48 66M68 58L86 66M90 48L116 62" stroke="#fff" strokeWidth="3" />
        <path d="M22 2L27 17L48 13L36 28L46 46L31 38L16 50L18 33L4 25L19 19Z" fill="#e8eaf4" />
        <path d="M22 2L27 17L18 33L4 25L19 19Z" fill="#e04455" />
        <path d="M27 17L48 13L36 28L46 46L31 38L16 50L24 36Z" fill="#4a9be0" />
        <path d="M20 32L30 17L34 22L24 36Z" fill="#eceef6" />
        <path d="M102 5Q110 26 96 46Q84 62 60 62Q52 40 66 22Q80 5 102 5Z" fill="url(#ball)" />
        <path d="M68 42L98 12" stroke="#fff" strokeWidth="2.500" />
        <path d="M68 34L76 42M74 28L82 36M80 22L88 30M86 16L94 24M91 11L98 18" stroke="#fff" strokeWidth="2.500" />
        <path d="M111 6V28Q112 32 118 33L126 34V55M130 13V34L118 31M119 32Q124 24 128 34" fill="none" stroke="#e8c52e" strokeWidth="3" />
      </svg>
    </div>
  );
}

function Taskbar() {
  return (
    <div className="flex h-[126px] shrink-0 items-start bg-[linear-gradient(90deg,#24231b_0%,#27221b_14%,#24231b_28%,#24231b_55%,#26271a_78%,#25261b_100%)]">
      <Task w={62} className="ml-[1015px]">
        <defs>
          <linearGradient id="win" x1="0" y1="0" x2="1" y2="1">
            <stop offset="0" stopColor="#7af3ff" />
            <stop offset="1" stopColor="#0594ff" />
          </linearGradient>
        </defs>
        <path d="M2 32H30V62H0V34Q0 32 2 32ZM32 32H60Q62 32 62 34V62H32ZM0 65H30V95H2Q0 95 0 93ZM32 65H62V93Q62 95 60 95H32Z" fill="url(#win)" />
      </Task>
      <SearchBox />
      <Task w={65} className="ml-[32px]">
        <defs>
          <linearGradient id="tv" x1="0" y1="0" x2="0" y2="1">
            <stop offset="0" stopColor="#fff" />
            <stop offset="1" stopColor="#dcdcdc" />
          </linearGradient>
        </defs>
        <rect x="0" y="49" width="49" height="43" rx="2" fill="#626262" />
        <rect x="16" y="32" width="49" height="44" rx="2" fill="url(#tv)" />
        <rect x="16" y="49" width="33" height="27" fill="#a4a4a4" />
      </Task>
      <Task w={65} className="ml-[52px]">
        <ChromeMark />
      </Task>
      <Task w={61} className="ml-[54px]">
        <defs>
          <linearGradient id="cpa" x1="0" y1="0" x2="0" y2="1">
            <stop offset="0" stopColor="#1cb5f5" />
            <stop offset="0.400" stopColor="#1688d8" />
            <stop offset="0.700" stopColor="#5fbf60" />
            <stop offset="1" stopColor="#f3d015" />
          </linearGradient>
          <linearGradient id="cpb" x1="0" y1="0" x2="0" y2="1">
            <stop offset="0" stopColor="#a64fe8" />
            <stop offset="0.500" stopColor="#ee5590" />
            <stop offset="1" stopColor="#ffb35c" />
          </linearGradient>
        </defs>
        <path d="M30 36H38Q43 36 45 42L47 49H54Q48 48 42 52L34 50Z" fill="#1950c8" />
        <path d="M13 76H24L28 70L22 89Q18 88 16 83Z" fill="#f0603a" />
        <path d="M16 36H38Q33 37 31 43L24 68Q21 76 13 76H6Q-2 74 1 62L7 43Q9 36 16 36Z" fill="url(#cpa)" />
        <path d="M45 89H21Q27 88 29 82L37 56Q40 49 47 49H54Q63 51 60 62L54 82Q52 89 45 89Z" fill="url(#cpb)" />
      </Task>
      <Task w={65} className="ml-[54px]">
        <defs>
          <linearGradient id="ea" x1="0" y1="0" x2="1" y2="0.500">
            <stop offset="0" stopColor="#2aa7ee" />
            <stop offset="0.500" stopColor="#2fc0dd" />
            <stop offset="1" stopColor="#6fe84a" />
          </linearGradient>
          <linearGradient id="eb" x1="0" y1="0" x2="0" y2="1">
            <stop offset="0" stopColor="#1390e0" />
            <stop offset="1" stopColor="#0a66c2" />
          </linearGradient>
        </defs>
        <path d="M1 56Q6 30 33 30Q62 31 65 58Q65 74 48 74Q38 74 39 68Q43 62 41 56Q35 44 20 44Q7 45 1 56Z" fill="url(#ea)" />
        <path d="M0 62Q3 46 20 45Q33 45 38 53Q26 56 27 72Q31 88 46 88Q54 87 58 83Q61 81 61 84Q52 95 33 95Q2 94 0 62Z" fill="url(#eb)" />
        <path d="M33 54Q26 60 27 72Q30 86 44 87Q54 87 60 82Q62 82 60 85Q51 95 36 94Q20 90 19 72Q20 57 33 54Z" fill="#0f4f9c" />
      </Task>
      <Task w={64} className="ml-[53px]" dot={31}>
        <defs>
          <linearGradient id="fo" x1="0" y1="0" x2="1" y2="1">
            <stop offset="0" stopColor="#ffdf78" />
            <stop offset="1" stopColor="#fcbf24" />
          </linearGradient>
        </defs>
        <path d="M0 38Q0 34 4 34H20L27 41V52H0Z" fill="#dfa006" />
        <path d="M0 46H20L27 41H61Q64 41 64 44V92H0Z" fill="url(#fo)" />
        <path d="M11 92V80Q11 75 16 75H48Q53 75 53 80V92Z" fill="#1076cf" />
        <path d="M18 83H46" stroke="#0c4c94" strokeWidth="3" />
      </Task>
      <Task w={62} className="ml-[54px]" dot={31}>
        <circle cx="31" cy="63" r="31" fill="#1ed760" />
        <path d="M12 52Q34 45 53 57M14 64Q33 58 49 68M15 75Q31 70 45 79" fill="none" stroke="#161f16" strokeWidth="5.500" strokeLinecap="round" />
      </Task>
      <Task w={77} className="ml-[54px]" dot={32}>
        <ChromeMark />
        <circle cx="55" cy="39.500" r="22" fill="#2a120a" />
        <path d="M46 24Q52 18 60 20L66 28L62 34L54 30Z" fill="#6b2412" />
        <path d="M54 31L62 27L70 34L66 40L58 40Z" fill="#e9b79a" />
        <path d="M60 24L72 30L68 34Z" fill="#c8322c" />
        <path d="M50 42Q60 38 72 44L64 56L52 58Z" fill="#a14a22" />
        <path d="M36 44Q42 48 46 56L42 56Z" fill="#7a3b20" />
        <path d="M66 36L72 37L70 42Z" fill="#d7d98a" />
      </Task>
      <Task w={64} className="ml-[41px]" dot={32}>
        <rect x="0" y="38" width="64" height="49" rx="3" fill="#444" />
        <path d="M0 48V41Q0 38 3 38H22V48Z" fill="#d6d6d6" />
        <path d="M22 38H43V48H22Z" fill="#a4a4a4" />
        <path d="M43 38H61Q64 38 64 41V48H43Z" fill="#6e6e6e" />
        <path d="M10 55L21 67L10 79" fill="none" stroke="#dedede" strokeWidth="6" />
        <rect x="28" y="74" width="21" height="7" fill="#f2f2f2" />
      </Task>
      <Task w={77} className="ml-[53px]" dot={32}>
        <ChromeMark />
        <circle cx="55" cy="39.500" r="22" fill="#4b28a4" />
        <text x="55" y="48" textAnchor="middle" fontSize="23" fill="#fff" fontFamily='"Open Sans", sans-serif'>N</text>
      </Task>
      <div className="ml-[44px] h-[126px] w-[56px] shrink-0">
        <SonicIcon className="mt-[34px]" s={56} h={57} bg="#2a2826" />
        <div className="ml-[19px] mt-[14px] h-[9.5px] w-[17px] rounded-full bg-[#a0a09a]" />
      </div>
      <Task w={56} className="ml-[61px]" dot={28}>
        <defs>
          <linearGradient id="ph" x1="0" y1="0" x2="1" y2="1">
            <stop offset="0" stopColor="#1e86dc" />
            <stop offset="0.600" stopColor="#5a58b0" />
            <stop offset="1" stopColor="#5e4a9c" />
          </linearGradient>
          <linearGradient id="pm" x1="0" y1="0" x2="1" y2="1">
            <stop offset="0" stopColor="#58e0ff" />
            <stop offset="1" stopColor="#1290e8" />
          </linearGradient>
        </defs>
        <rect x="0" y="34" width="56" height="57" rx="5" fill="url(#ph)" />
        <path d="M0 80L24 56Q28 52 32 56L56 80V86Q56 91 51 91H5Q0 91 0 86Z" fill="#128ce4" />
        <path d="M0 80L24 56Q28 52 32 56L36 61L10 91H5Q0 91 0 86Z" fill="url(#pm)" />
        <circle cx="42" cy="44.500" r="6" fill="#fff" />
      </Task>
      <Task w={65} className="ml-[57px]" dot={32}>
        <path d="M47 31L1 73Q-1 75 1 77L6 80L48 48Z" fill="#0a70b8" />
        <path d="M0 50L7 46L49 77V95H46L1 54Q-1 52 0 50Z" fill="#0d8ad8" />
        <path d="M47 31L62 38Q65 40 65 42V84Q65 87 62 88L47 95Z" fill="#28aaf2" />
      </Task>
      <svg className="ml-[469px] mt-[54px] shrink-0" width="31" height="18" viewBox="0 0 31 18">
        <path d="M2 16L15.500 2.500L29 16" fill="none" stroke="#f2f2f2" strokeWidth="4" />
      </svg>
      <svg className="ml-[47px] mt-[45px] shrink-0" width="45" height="34" viewBox="0 0 45 34" fill="none" strokeWidth="3.500" strokeLinecap="round">
        <path d="M2 13Q22.500 -8 43 13" stroke="#6a6a62" />
        <path d="M8.500 19Q22.500 5 36.500 19M14 25Q22.500 17 31 25" stroke="#fff" />
        <circle cx="22.500" cy="29" r="4.500" fill="#fff" />
      </svg>
      <svg className="ml-[18px] mt-[43px] shrink-0" width="44" height="38" viewBox="0 0 44 38" fill="none" strokeWidth="3.200" strokeLinecap="round" strokeLinejoin="round">
        <path d="M2 13H9L18 5V34L9 26H2Z" stroke="#fff" />
        <path d="M24 14Q28 19.500 24 25M29 9Q37 19.500 29 30" stroke="#fff" />
        <path d="M36 4Q46 19.500 36 35" stroke="#6a6a62" />
      </svg>
      <svg className="ml-[20px] mt-[41px] shrink-0" width="44" height="37" viewBox="0 0 44 37">
        <path d="M16 10H31Q36 10 36 15V29Q36 34 31 34H7Q2 34 2 29V22" fill="none" stroke="#fff" strokeWidth="3.200" />
        <path d="M39 18Q44 18 44 22Q44 26 39 26Z" fill="#fff" />
        <path d="M17 14H25V30H7V26Z" fill="#fff" />
        <path d="M8 0L1 15H6L4 25L15 10H10L13 0Z" fill="#fff" stroke="#25261b" strokeWidth="1" />
      </svg>
      <div className="ml-[24px] mt-[18px] flex w-[150px] shrink-0 flex-col items-end text-[32px] leading-[43px] text-white">
        <Fit w={132}>10:56 PM</Fit>
        <Fit w={130}>2/9/2025</Fit>
      </div>
      <svg className="ml-[25px] mt-[42px] shrink-0" width="38" height="42" viewBox="0 0 38 42">
        <path d="M17 2Q4 4 4 18V26L1 32V35H35V32L32 26V20H30V8H24V2Z" fill="#fff" />
        <path d="M11 36H24Q23 41 17.500 41Q12 41 11 36Z" fill="#fff" />
        <path d="M23 0H38V16H23Z" fill="#25261b" />
        <path d="M26 3H35L27 13H36" fill="none" stroke="#fff" strokeWidth="3" />
        <path d="M13 15H22L13 25H23" fill="none" stroke="#25261b" strokeWidth="3" />
      </svg>
    </div>
  );
}

export default function App() {
  return (
    <div className="relative flex h-[2302px] w-[4096px] flex-col overflow-hidden bg-[#1f1f1f] font-['Open_Sans','Noto_Sans',sans-serif]">
      <TitleBar />
      <MenuBar />
      <Toolbar />
      <div className="flex h-[1746px] shrink-0 pl-[26px]">
        <Pane />
        <SidePanel />
      </div>
      <div className="flex h-[147px] shrink-0 items-start">
        <Overview />
        <Knob />
        <LevelButton />
      </div>
      <div className="flex h-[51px] shrink-0 flex-col">
        <div className="flex h-[45px] shrink-0 pl-[8px] pr-[28px]">
          <div className="flex-1 border-r-[2px] border-[#747474] text-[32px] leading-[49px] text-white">
            <Fit w={573}>Visible: 0.000 to 26.579 (duration 26.579)</Fit>
          </div>
        </div>
        <div className="h-[3px] bg-[#777]" />
        <div className="h-[3px] border-b-[2px] border-[#4a4a46]" />
      </div>
      <Taskbar />
      <div className="absolute left-0 top-0 h-full w-[3px] bg-[#e8e8e8]" />
      <div className="absolute left-0 top-[1965px] h-[160px] w-[3457px] border-[7px] border-[#fe0000]" />
    </div>
  );
}
